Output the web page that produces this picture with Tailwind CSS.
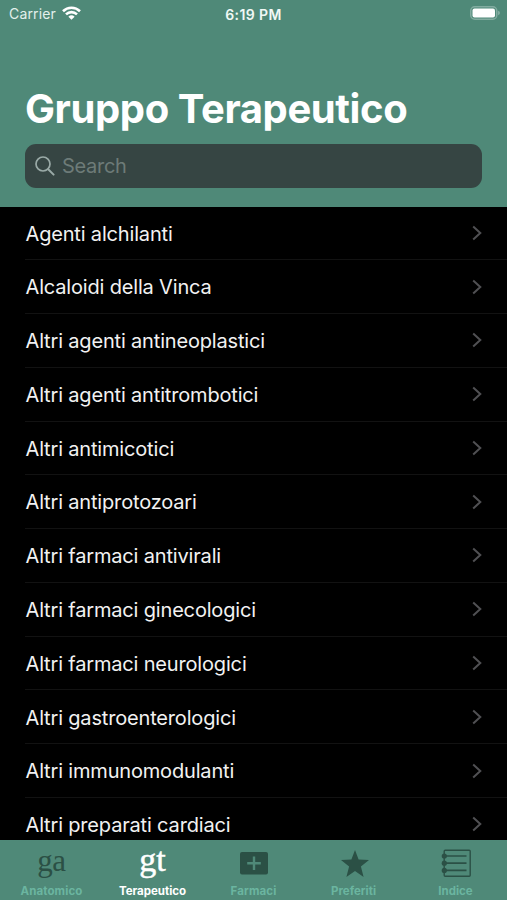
<!DOCTYPE html>
<html lang="it">
<head>
  <meta charset="UTF-8" />
  <meta name="viewport" content="width=device-width, initial-scale=1.0" />
  <title>Gruppo Terapeutico</title>
  <script src="https://cdn.jsdelivr.net/npm/@tailwindcss/browser@4"></script>
</head>
<body class="bg-black text-white h-[900px] flex flex-col overflow-hidden font-['Inter','Liberation_Sans',sans-serif]">

  <header class="h-[206.5px] shrink-0 bg-[#4f8978]">
    <!-- status bar -->
    <div class="grid grid-cols-3 items-center h-7 pl-[9px] pr-[7px] text-[14px]">
      <div class="flex items-center gap-[6px] text-[#e3f0ec]">
        <span class="tracking-[0.15px] -mt-[1px]">Carrier</span>
        <svg class="w-[19px] h-[14px] -mt-[2px]" viewBox="0 0 19 14" fill="none" stroke="white" stroke-width="2.6">
          <path d="M1 5.2a12.2 12.2 0 0 1 17 0" />
          <path d="M4 8.4a7.9 7.9 0 0 1 11 0" />
          <path d="M9.5 13.8L6.4 10.7a4.5 4.5 0 0 1 6.2 0z" fill="white" stroke="none" />
        </svg>
      </div>
      <span class="text-center font-semibold text-[14px] tracking-[0.4px] -ml-[2px] text-[#f0f8f5]">6:19 PM</span>
      <svg class="justify-self-end w-[30px] h-[14px] -mt-[2px]" viewBox="0 0 30 14">
        <rect x="0.75" y="0.75" width="26" height="12.5" rx="4" fill="none" stroke="#82aca0" stroke-width="1.5" />
        <rect x="2.5" y="2.5" width="22.5" height="9" rx="2" fill="white" />
        <path d="M28 4.8q2 .6 2 2.2t-2 2.2z" fill="#82aca0" />
      </svg>
    </div>

    <h1 class="mt-[56px] pl-[25px] h-[50px] leading-[50px] text-[40px] font-bold tracking-[-0.4px] whitespace-nowrap">Gruppo Terapeutico</h1>

    <div class="mt-[10px] mx-[25px] h-[43.5px] rounded-[11px] bg-[#364543] flex items-center pl-[10px] gap-[7px]">
      <svg class="w-5 h-5" viewBox="0 0 20 20" fill="none" stroke="#9aaaa7" stroke-width="1.7" stroke-linecap="round">
        <circle cx="8" cy="8" r="7" />
        <path d="M13.2 13.2L18.6 18.6" stroke-width="2" />
      </svg>
      <span class="text-[20px] tracking-[-0.3px] pt-[1px] text-[#6d7b78]">Search</span>
    </div>
  </header>

  <main id="list" class="flex-1 min-h-0 overflow-hidden"></main>

  <nav class="h-[60px] shrink-0 bg-[#4f8978] grid grid-cols-5 px-[1px] text-center text-[11.5px] leading-[14px] font-bold text-[#6bb5a0]">
    <div class="flex flex-col items-center">
      <span class="h-[44px] leading-[41px] text-[31px] font-normal tracking-[-0.5px] text-[#2b5045] font-['Liberation_Serif',serif]">ga</span>
      <span class="tracking-[0.1px]">Anatomico</span>
    </div>
    <div class="flex flex-col items-center text-white">
      <span class="h-[44px] leading-[39px] text-[34px] font-normal font-['Liberation_Serif',serif] [-webkit-text-stroke:0.5px_white]">gt</span>
      <span>Terapeutico</span>
    </div>
    <div class="flex flex-col items-center">
      <svg class="w-7 h-[44px]" viewBox="0 0 28 44">
        <rect y="12" width="28" height="22.5" rx="2" fill="#2b5045" />
        <path d="M14 16.5v13.5M7.2 23.2h13.6" stroke="#4f8978" stroke-width="2.4" />
      </svg>
      <span class="tracking-[0.1px]">Farmaci</span>
    </div>
    <div class="flex flex-col items-center">
      <svg class="w-7 h-[44px]" viewBox="0 0 28 44" fill="#2b5045">
        <path d="M14 10L17.6 19.6L28 20.1L19.9 26.5L22.6 37L14 31L5.4 37L8.1 26.5L0 20.1L10.4 19.6Z" />
      </svg>
      <span class="-ml-[2px]">Preferiti</span>
    </div>
    <div class="flex flex-col items-center">
      <svg class="w-[30px] h-[44px]" viewBox="0 0 30 44" fill="none" stroke="#2b5045">
        <rect x="3.2" y="10.2" width="26" height="26" rx="1" stroke-width="1.4" />
        <path d="M3 16h22.5M3 23.2h22.5M3 30.4h22.5" stroke-width="1.7" />
        <g fill="#2b5045" stroke="none">
          <circle cx="3.3" cy="16" r="2.6" />
          <circle cx="3.3" cy="23.2" r="2.6" />
          <circle cx="3.3" cy="30.4" r="2.6" />
        </g>
      </svg>
      <span>Indice</span>
    </div>
  </nav>

  <script>
    const groups = [
      "Agenti alchilanti",
      "Alcaloidi della Vinca",
      "Altri agenti antineoplastici",
      "Altri agenti antitrombotici",
      "Altri antimicotici",
      "Altri antiprotozoari",
      "Altri farmaci antivirali",
      "Altri farmaci ginecologici",
      "Altri farmaci neurologici",
      "Altri gastroenterologici",
      "Altri immunomodulanti",
      "Altri preparati cardiaci"
    ];

    document.getElementById("list").innerHTML = groups.map((name) => `
      <div class="ml-[25px] h-[53.77px] pr-[25px] flex items-center justify-between border-b border-[#121212]">
        <span class="pl-[0.5px] pt-[1.5px] text-[20px] tracking-[-0.17px] text-[#f2f2f2]">${name}</span>
        <svg class="w-[10px] h-[16px]" viewBox="0 0 10 16" fill="none" stroke="#505053" stroke-width="2">
          <path d="M1.2 1.5L8.3 8L1.2 14.5" />
        </svg>
      </div>
    `).join("");
  </script>
</body>
</html>
